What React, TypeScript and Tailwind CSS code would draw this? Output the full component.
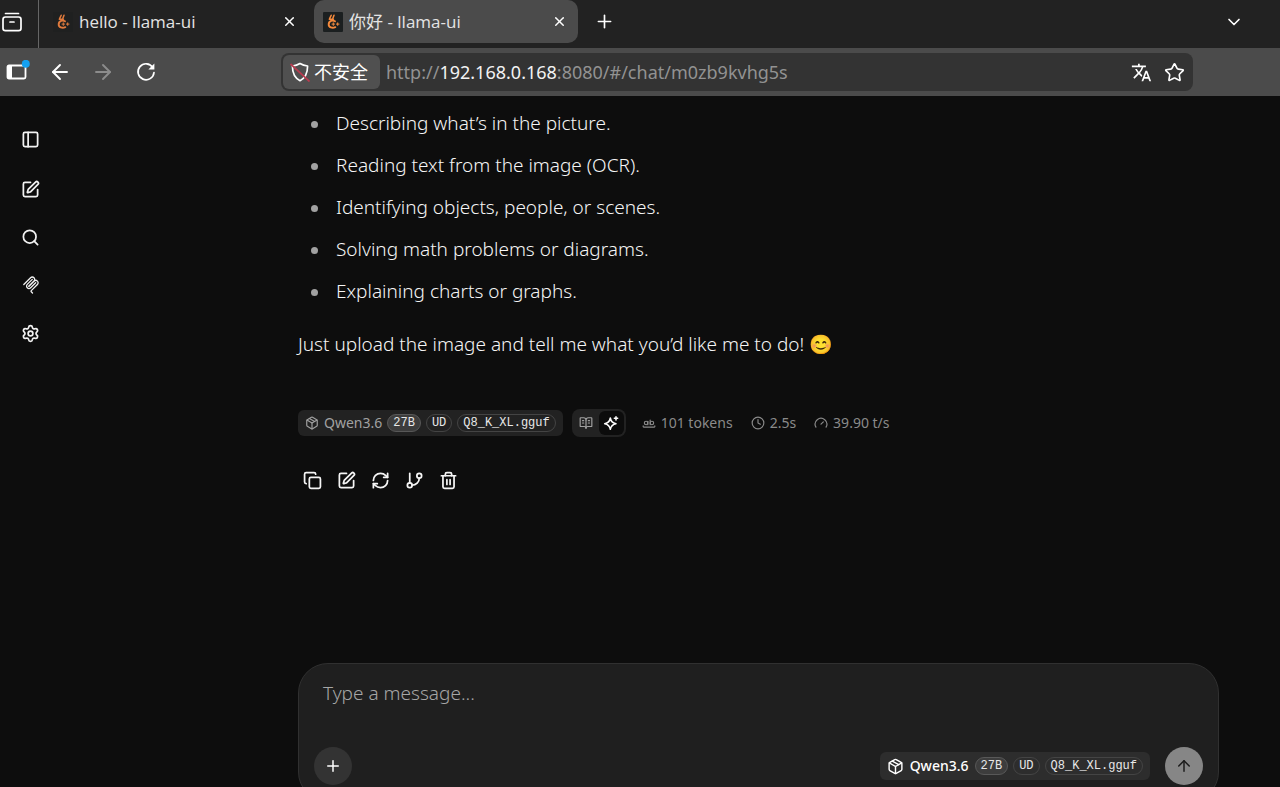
import React from "react";
import {
  ArrowLeft,
  ArrowRight,
  ArrowUp,
  BookOpenText,
  ChevronDown,
  Clock,
  Copy,
  Gauge,
  GitBranch,
  Package,
  PanelLeft,
  Plus,
  RefreshCw,
  Search,
  Settings,
  Sparkle,
  SquarePen,
  Star,
  Trash2,
  WholeWord,
  X,
} from "lucide-react";
import { MdTranslate } from "react-icons/md";

function LlamaLogo({ active }: { active?: boolean }) {
  return (
    <svg viewBox="0 0 20 20" className="size-5 shrink-0" aria-hidden="true">
      <rect width="20" height="20" rx="1" fill={active ? "#1b1f20" : "#1f2020"} />
      <g fill="none" stroke={active ? "#f58a3c" : "#e07a3c"} strokeLinecap="round" strokeLinejoin="round">
        <path d="M12 9.200C9.800 7.900 5.800 8.800 5.700 12.200c-.1 3.300 3.600 4.400 6.600 3" strokeWidth="1.900" />
        <path d="M6.600 6.600 8.200 3.200M9.800 6.600l1.200-3.400M6.300 7.300h4.200" strokeWidth="1.500" />
        <path d="M9 12.100h2.600M10.300 10.800v2.600M13.400 12.100H16M14.700 10.800v2.600" strokeWidth="1" />
      </g>
    </svg>
  );
}

function McpIcon() {
  return (
    <svg viewBox="0 0 180 180" className="size-[18px]" fill="none" stroke="currentColor" strokeWidth="13" strokeLinecap="round" aria-hidden="true">
      <path d="M18 84.853 85.882 16.971c9.373-9.373 24.569-9.373 33.941 0 9.373 9.372 9.373 24.568 0 33.941L68.558 102.177" />
      <path d="m69.265 101.470 50.558-50.558c9.373-9.373 24.569-9.373 33.942 0l.353.353c9.373 9.373 9.373 24.569 0 33.941L92.725 146.600c-3.125 3.124-3.125 8.189 0 11.313l12.606 12.607" />
      <path d="M102.853 33.941 52.648 84.146c-9.373 9.372-9.373 24.568 0 33.941 9.372 9.372 24.568 9.372 33.941 0l50.205-50.205" />
    </svg>
  );
}

function GenerationIcon() {
  return (
    <svg viewBox="0 0 24 24" className="size-4" fill="none" stroke="currentColor" strokeWidth="2.300" strokeLinecap="round" strokeLinejoin="round" aria-hidden="true">
      <path d="M11 4.500c.9 5.100 3.400 7.600 8.500 8.500-5.100.9-7.600 3.400-8.500 8.500-.9-5.100-3.400-7.600-8.500-8.500 5.100-.9 7.600-3.400 8.500-8.500z" />
      <path d="M19.500 2.500v5M17 5h5" />
    </svg>
  );
}

type TabProps = { title: string; active?: boolean };

function Tab({ title, active }: TabProps) {
  return (
    <div
      className={
        active
          ? "flex h-[43px] w-[264px] items-center rounded-[10px] bg-[#4b4b4b] pr-[11px] pl-[9px]"
          : "flex h-[43px] w-[264px] items-center pr-[17px] pl-[3px]"
      }
    >
      <button type="button" className="flex min-w-0 flex-1 items-center gap-[6px] text-left font-['Open_Sans','Noto_Sans_CJK_SC',sans-serif] text-[17px] text-[#e4e4e4]">
        <LlamaLogo active={active} />
        <span className="truncate">{title}</span>
      </button>
      <button type="button" aria-label={"Close " + title} className="text-white">
        <X className="size-[15px]" strokeWidth={2.400} />
      </button>
    </div>
  );
}

function TabStrip() {
  return (
    <div className="flex h-12 shrink-0 bg-[#222222]">
      <button type="button" aria-label="Recent browsing" className="flex w-[39px] items-center border-r border-[#666] pb-[5px] text-white">
        <svg viewBox="0 0 20 20" className="ml-[2px] size-5 shrink-0" fill="none" stroke="currentColor" strokeWidth="1.700" strokeLinecap="round" aria-hidden="true">
          <path d="M3.500 1.500h13" />
          <rect x="1" y="5" width="18" height="13.600" rx="2.400" />
          <path d="M8 10h4" />
        </svg>
      </button>
      <div className="flex flex-1 items-start pl-[11px]">
        <Tab title="hello - llama-ui" />
        <Tab title="你好 - llama-ui" active />
        <button type="button" aria-label="New tab" className="flex h-[43px] w-[53px] items-center justify-center text-white">
          <Plus className="size-[21px]" strokeWidth={1.900} />
        </button>
        <button type="button" aria-label="List all tabs" className="mr-9 ml-auto flex h-[43px] items-center text-white">
          <ChevronDown className="size-5" strokeWidth={2} />
        </button>
      </div>
    </div>
  );
}

function AddressBar() {
  return (
    <div className="flex h-12 shrink-0 items-center bg-[#4b4b4b] pr-[87px] pl-[6px] text-white">
      <button type="button" aria-label="Show sidebar" className="mr-[18px]">
        <svg viewBox="0 0 24 24" className="size-6" aria-hidden="true">
          <rect x="1.500" y="5.500" width="18" height="13" rx="1.500" fill="none" stroke="currentColor" strokeWidth="1.800" />
          <path d="M1.500 5.500h4.500v13H1.500z" fill="currentColor" />
          <circle cx="19.800" cy="3.800" r="4" fill="#14a0f0" />
        </svg>
      </button>
      <button type="button" aria-label="Back" className="mr-[19px]">
        <ArrowLeft className="size-6" strokeWidth={1.900} />
      </button>
      <button type="button" aria-label="Forward" className="mr-[20px] text-[#8c8c8c]">
        <ArrowRight className="size-6" strokeWidth={1.900} />
      </button>
      <button type="button" aria-label="Reload">
        <svg viewBox="0 0 22 22" className="size-[22px]" fill="none" stroke="currentColor" strokeWidth="1.700" strokeLinecap="round" aria-hidden="true">
          <path d="M17.800 6.500A8 8 0 1 0 19 11.500" />
          <path d="M19.400 2.600v6h-6z" fill="currentColor" stroke="none" />
        </svg>
      </button>
      <div className="ml-[124px] flex h-[38px] min-w-0 flex-1 items-center rounded-lg bg-[#333333] pr-[8px] pl-[2px]">
        <button type="button" className="flex h-[34px] shrink-0 items-center gap-[4px] rounded-md bg-[#505050] pr-[12px] pl-[7px] text-lg">
          <svg viewBox="0 0 20 20" className="size-5 shrink-0" fill="none" aria-hidden="true">
            <path d="M10 1.500c2.400 1.600 5 2.300 7.600 2.500 0 6.500-1.800 11.700-7.600 14.700C4.200 15.700 2.400 10.500 2.400 4 5 3.800 7.600 3.100 10 1.500z" stroke="currentColor" strokeWidth="1.700" strokeLinejoin="round" />
            <path d="M0.500 2 19.500 19.500" stroke="#b83a4e" strokeWidth="1.700" />
          </svg>
          不安全
        </button>
        <div className="ml-[6px] min-w-0 flex-1 truncate text-lg text-[#929292]">
          http://<span className="text-[#f2f2f2]">192.168.0.168</span>:8080/#/chat/m0zb9kvhg5s
        </div>
        <button type="button" aria-label="Translate page" className="mr-3">
          <MdTranslate className="size-[21px]" />
        </button>
        <button type="button" aria-label="Bookmark this page">
          <Star className="size-[21px]" strokeWidth={1.900} />
        </button>
      </div>
    </div>
  );
}

function SideNav() {
  const items = [
    { label: "New chat", icon: <SquarePen className="size-[19px]" strokeWidth={2.200} /> },
    { label: "Search", icon: <Search className="size-[19px]" strokeWidth={2.200} /> },
    { label: "MCP servers", icon: <McpIcon /> },
    { label: "Settings", icon: <Settings className="size-[19px]" strokeWidth={2.200} /> },
  ];
  return (
    <nav aria-label="Chat navigation" className="flex w-[61px] shrink-0 flex-col items-center pt-[19px] text-[#f2f2f2]">
      <button type="button" aria-label="Toggle sidebar" className="mb-[2px] flex size-12 items-center justify-center">
        <PanelLeft className="size-[19px]" strokeWidth={2.200} />
      </button>
      {items.map((item) => (
        <button key={item.label} type="button" aria-label={item.label} className="flex size-12 items-center justify-center">
          {item.icon}
        </button>
      ))}
    </nav>
  );
}

function ModelBadges() {
  return (
    <span className="flex gap-[5px] font-['Liberation_Mono',monospace] text-xs leading-[16px] font-normal text-[#e8e8e8]">
      <span className="rounded-full border border-[#585858] bg-[#3d3d3d] px-[5px]">27B</span>
      <span className="rounded-full border border-[#444] px-[5px]">UD</span>
      <span className="rounded-full border border-[#444] px-[5px]">Q8_K_XL.gguf</span>
    </span>
  );
}

const abilities = [
  "Describing what’s in the picture.",
  "Reading text from the image (OCR).",
  "Identifying objects, people, or scenes.",
  "Solving math problems or diagrams.",
  "Explaining charts or graphs.",
];

const actions = [
  { label: "Copy", Icon: Copy },
  { label: "Edit", Icon: SquarePen },
  { label: "Regenerate", Icon: RefreshCw },
  { label: "Branch", Icon: GitBranch },
  { label: "Delete", Icon: Trash2 },
];

function Message() {
  return (
    <article className="flex-1 pt-[10px] text-[#f5f5f5]">
      <ul className="flex flex-col gap-2 pl-[13px] text-[19px] leading-[34px] font-light">
        {abilities.map((text) => (
          <li key={text} className="flex items-center gap-[18px]">
            <span className="mt-[2px] size-[7px] rounded-full bg-[#a1a1a1]" />
            {text}
          </li>
        ))}
      </ul>
      <p className="mt-[19px] text-[19px] leading-[34px] font-light">
        Just upload the image and tell me what you’d like me to do! 😊
      </p>
      <div className="mt-[48px] flex h-7 items-center text-sm text-[#a1a1a1]">
        <button type="button" className="flex h-[26px] items-center gap-[5px] rounded-md bg-[#222222] px-[7px]">
          <Package className="size-[14px]" />
          Qwen3.6
          <ModelBadges />
        </button>
        <div className="ml-[9px] flex h-7 items-center rounded-lg bg-[#222222] px-[2px]">
          <button type="button" aria-label="Reading" className="flex h-6 w-[25px] items-center justify-center">
            <BookOpenText className="size-[14px]" />
          </button>
          <button type="button" aria-label="Generation" className="flex h-6 w-[25px] items-center justify-center rounded-md bg-[#0c0c0c] text-white">
            <GenerationIcon />
          </button>
        </div>
        <div className="ml-4 flex gap-[18px] text-[#8a8a8a]">
          <span className="flex items-center gap-[5px]">
            <WholeWord className="size-[14px]" />
            101 tokens
          </span>
          <span className="flex items-center gap-[5px]">
            <Clock className="size-[14px]" />
            2.5s
          </span>
          <span className="flex items-center gap-[5px]">
            <Gauge className="size-[14px]" />
            39.90 t/s
          </span>
        </div>
      </div>
      <div className="mt-[29px] flex gap-[6px]">
        {actions.map(({ label, Icon }) => (
          <button key={label} type="button" aria-label={label} className="flex size-7 items-center justify-center">
            <Icon className="size-[19px]" strokeWidth={2.200} />
          </button>
        ))}
      </div>
    </article>
  );
}

function Composer() {
  return (
    <form
      onSubmit={(event) => event.preventDefault()}
      className="-mb-[15px] flex h-[139px] shrink-0 flex-col justify-between rounded-[30px] border border-[#303030] bg-[#1f1f1f] px-[15px] pt-[14px] pb-[16px]"
    >
      <textarea
        aria-label="Message"
        placeholder="Type a message..."
        rows={1}
        className="w-full resize-none bg-transparent px-[9px] text-[19px] leading-[30px] font-light text-white outline-none placeholder:text-[#a6a6a6]"
      />
      <div className="flex items-center">
        <button type="button" aria-label="Add attachment" className="flex size-[38px] items-center justify-center rounded-full bg-[#333333] text-white">
          <Plus className="size-[18px]" />
        </button>
        <button type="button" className="ml-auto flex h-7 items-center gap-[6px] rounded-md bg-[#2d2d2d] px-[7px] text-sm font-medium text-white">
          <Package className="size-[17px]" />
          Qwen3.6
          <ModelBadges />
        </button>
        <button type="submit" aria-label="Send" className="ml-[15px] flex size-[38px] items-center justify-center rounded-full bg-[#868686] text-[#1c1c1c]">
          <ArrowUp className="size-[18px]" />
        </button>
      </div>
    </form>
  );
}

export default function App() {
  return (
    <div className="flex h-screen flex-col overflow-hidden bg-[#0d0d0d] font-['Noto_Sans','Noto_Sans_CJK_SC',sans-serif]">
      <TabStrip />
      <AddressBar />
      <div className="flex min-h-0 flex-1">
        <SideNav />
        <main className="mr-[61px] ml-[237px] flex min-w-0 flex-1 flex-col">
          <Message />
          <Composer />
        </main>
      </div>
    </div>
  );
}
